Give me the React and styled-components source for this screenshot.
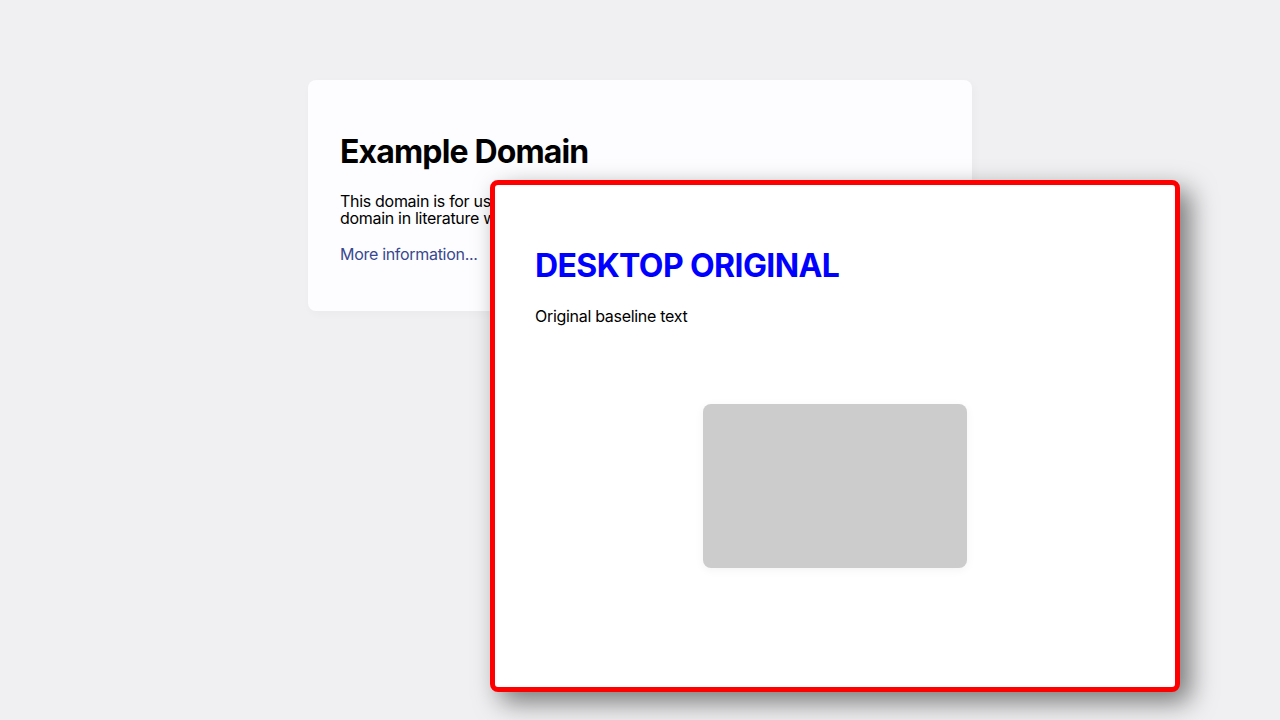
import React from 'react';
import styled, { createGlobalStyle } from 'styled-components';

const GlobalStyle = createGlobalStyle`
  html, body {
    margin: 0;
    padding: 0;
    background-color: #f0f0f2;
    font-family: Inter, "Open Sans", "Liberation Sans", sans-serif;
  }
`;

function App() {
  return (
    <>
      <GlobalStyle />
      <Page>
        <Card>
          <Title>Example Domain</Title>
          <Text>
            This domain is for use in illustrative examples in documents. You may use this
            domain in literature without prior coordination or asking for permission.
          </Text>
          <Text $top={19}>
            <Link href="#">More information...</Link>
          </Text>
        </Card>

        <Overlay>
          <OverlayTitle>DESKTOP ORIGINAL</OverlayTitle>
          <OverlayText>Original baseline text</OverlayText>
          <Placeholder />
        </Overlay>
      </Page>
    </>
  );
}

export default App;

const Page = styled.div`
  position: relative;
  width: 100%;
  height: 720px;
  overflow: hidden;
  padding-top: 80px;
  box-sizing: border-box;
`;

const Card = styled.div`
  width: 600px;
  margin: 0 auto;
  padding: 32px;
  background-color: #fdfdff;
  border-radius: 8px;
  box-shadow: 2px 3px 7px 2px rgba(0, 0, 0, 0.02);
`;

const Title = styled.h1`
  font-size: 32px;
  font-weight: 700;
  line-height: 41px;
  letter-spacing: -0.85px;
  margin: 19px 0 21px;
  color: #000;
`;

const Text = styled.p`
  font-size: 16px;
  line-height: 17px;
  letter-spacing: -0.3px;
  margin: ${(p) => p.$top ?? 0}px 0 16px;
  color: #000;
`;

const Link = styled.a`
  color: #38488f;
  text-decoration: none;
`;

/* floating window laid over the page */
const Overlay = styled.div`
  position: absolute;
  left: 490px;
  top: 180px;
  width: 690px;
  height: 512px;
  box-sizing: border-box;
  padding: 40px;
  background: #fff;
  border: 5px solid #ff0000;
  border-radius: 8px;
  box-shadow: 10px 10px 26px rgba(0, 0, 0, 0.5);
`;

const OverlayTitle = styled.h1`
  font-size: 32px;
  font-weight: 700;
  line-height: 40px;
  letter-spacing: -0.6px;
  margin: 21px 0;
  color: #0000ff;
`;

const OverlayText = styled.p`
  font-size: 16px;
  line-height: 18px;
  letter-spacing: -0.3px;
  margin: 14px 0 0;
  color: #000;
`;

const Placeholder = styled.div`
  width: 264px;
  height: 164px;
  margin: 79px auto 0;
  background: #cccccc;
  border-radius: 8px;
  box-shadow: 0 2px 10px rgba(0, 0, 0, 0.05);
`;
